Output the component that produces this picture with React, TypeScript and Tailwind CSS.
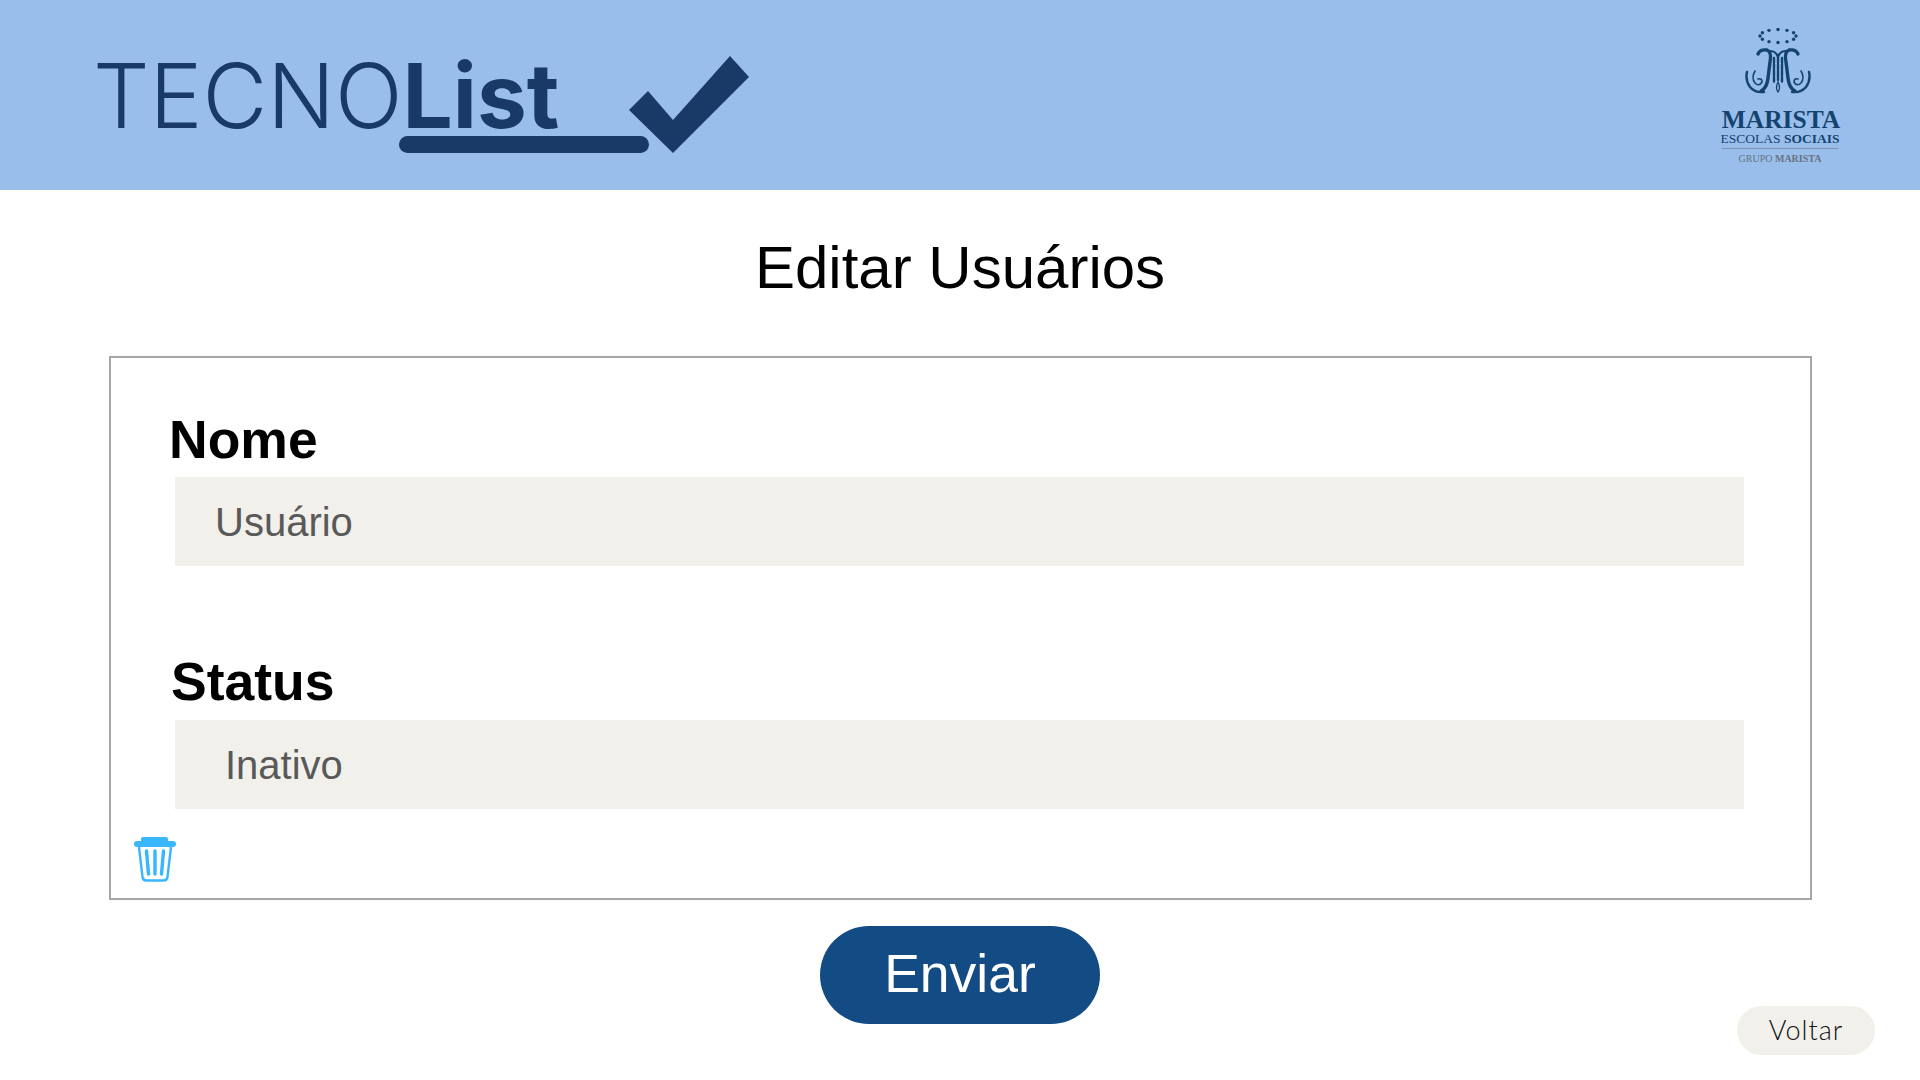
const sans = { fontFamily: '"Liberation Sans", Arial, sans-serif' };

function Check() {
  return (
    <svg width="120" height="97" viewBox="0 0 120 97" className="shrink-0">
      <path d="M0 54 L19 35 L44 64 L101 0 L120 21 L44 97 Z" fill="#193a66" />
    </svg>
  );
}

function Trash() {
  return (
    <svg width="44" height="46" viewBox="0 0 44 46" fill="none">
      <path d="M8 3 Q8 1 10 1 H33 Q35 1 35 3 V5 H8 Z" fill="#38b6ff" />
      <rect x="1" y="5" width="42" height="6" rx="3" fill="#38b6ff" />
      <path d="M6 11 L9.5 41 Q10 44.5 13.5 44.5 H30.5 Q34 44.5 34.5 41 L38 11" stroke="#38b6ff" strokeWidth="2.4" />
      <path d="M13.5 15 L15.5 38 M22 15 V38 M30.5 15 L28.5 38" stroke="#38b6ff" strokeWidth="3.4" strokeLinecap="round" />
    </svg>
  );
}

function Monogram() {
  const stars = Array.from({ length: 12 }, (_, i) => {
    const a = (i / 12) * Math.PI * 2;
    return { x: 35 + Math.cos(a) * 18, y: 8 + Math.sin(a) * 6.5 };
  });
  return (
    <svg width="70" height="66" viewBox="0 0 70 66" fill="none">
      {stars.map((s, i) => (
        <circle key={i} cx={s.x} cy={s.y} r="1.7" fill="#15436f" />
      ))}
      <g stroke="#15436f" strokeLinecap="round">
        <path d="M15 26 Q17 21 24 22 Q29 24 27 34 L25 50 Q24 60 18 63" strokeWidth="3.4" />
        <path d="M55 26 Q53 21 46 22 Q41 24 43 34 L45 50 Q46 60 52 63" strokeWidth="3.4" />
        <path d="M27 23 Q33 23 35 29 Q37 23 43 23" strokeWidth="2.2" />
        <path d="M31 30 V54 M39 30 V54" strokeWidth="2.4" strokeDasharray="5 1.2" />
        <path d="M35 29 V52" strokeWidth="2.4" strokeDasharray="6 1.2" />
        <path d="M35 54 Q32 60 35 64 Q38 60 35 54" strokeWidth="1.3" />
        <path d="M4 44 Q2 52 7 59 Q12 65 21 64" strokeWidth="2.4" />
        <path d="M66 44 Q68 52 63 59 Q58 65 49 64" strokeWidth="2.4" />
        <path d="M12 43 Q8 50 12 55 Q16 59 19 54 Q19 50 15 51" strokeWidth="1.6" />
        <path d="M58 43 Q62 50 58 55 Q54 59 51 54 Q51 50 55 51" strokeWidth="1.6" />
      </g>
    </svg>
  );
}

function Marista() {
  return (
    <div className="flex flex-col items-center w-[120px]" style={{ fontFamily: '"Liberation Serif", serif' }}>
      <div className="mr-[6px]">
        <Monogram />
      </div>
      <div className="mt-[14px] text-[25.5px] leading-[24px] font-bold text-[#15436f] whitespace-nowrap">MARISTA</div>
      <div className="mr-[2px] text-[13.5px] leading-[13px] text-[#15436f] whitespace-nowrap">
        ESCOLAS <span className="font-bold">SOCIAIS</span>
      </div>
      <div className="mr-[3px] w-[116px] h-px bg-[#7c93ad] mt-[3px]" />
      <div className="mr-[2px] mt-[4px] text-[10px] leading-[12px] text-[#66727f] whitespace-nowrap">
        GRUPO <span className="font-bold">MARISTA</span>
      </div>
    </div>
  );
}

function Field({ label, value, labelClass, valueClass }: { label: string; value: string; labelClass: string; valueClass: string }) {
  return (
    <div>
      <div className={`text-[53.5px] leading-[60px] font-bold text-black ${labelClass}`}>{label}</div>
      <div className={`h-[89px] ml-[64px] mr-[66px] bg-[#f1f0eb] flex items-center text-[40px] text-[#595959] ${valueClass}`}>
        {value}
      </div>
    </div>
  );
}

export default function App() {
  return (
    <div className="min-h-screen bg-white flex flex-col" style={sans}>
      <header className="h-[190px] bg-[#99beeb] flex items-start justify-between pl-[93px] pr-[79px] shrink-0">
        <div className="flex items-start pt-[47px]">
          <div className="relative h-[97px] text-[89px] leading-[97px] text-[#193a66] whitespace-nowrap" style={{ fontFamily: 'Inter, sans-serif' }}>
            <span className="font-[350]">TECNO</span>
            <span className="font-bold">List</span>
            <div className="absolute left-[306px] top-[89px] w-[250px] h-[17px] rounded-full bg-[#193a66]" />
          </div>
          <div className="ml-[70px] mt-[9px]">
            <Check />
          </div>
        </div>
        <div className="pt-[28px]">
          <Marista />
        </div>
      </header>

      <h1 className="h-[166px] pt-[39px] text-center text-[60px] leading-[77px] text-black">Editar Usuários</h1>

      <main className="ml-[109px] mr-[108px] h-[544px] border-2 border-[#a6a6a6] pt-[52px]">
        <Field label="Nome" value="Usuário" labelClass="pl-[58px] mb-[7px]" valueClass="pl-[40px]" />
        <div className="h-[86px]" />
        <Field label="Status" value="Inativo" labelClass="pl-[60px] mb-[8px]" valueClass="pl-[50px]" />
        <div className="pl-[22px] pt-[27px]">
          <Trash />
        </div>
      </main>

      <footer className="grid grid-cols-[1fr_280px_1fr] h-[129px] mt-[26px]">
        <div />
        <button className="h-[98px] pb-[2px] rounded-full bg-[#134b84] text-white text-[53.5px]">Enviar</button>
        <div className="flex justify-end items-end pr-[45px]">
          <button
            className="w-[138px] h-[49px] rounded-full bg-[#f1f0eb] text-[#111] text-[27px] font-light tracking-[1px]"
            style={{ fontFamily: 'Lato, sans-serif' }}
          >
            Voltar
          </button>
        </div>
      </footer>
    </div>
  );
}
